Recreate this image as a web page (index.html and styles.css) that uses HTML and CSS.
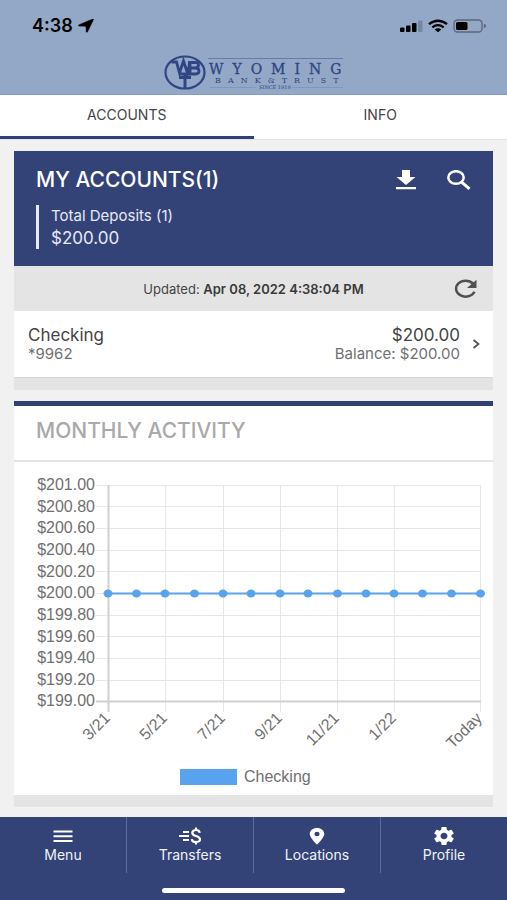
FILE: index.html
```html
<!DOCTYPE html>
<html lang="en">
<head>
<meta charset="utf-8">
<meta name="viewport" content="width=device-width, initial-scale=1">
<title>Wyoming Bank &amp; Trust</title>
<link rel="stylesheet" href="styles.css">
</head>
<body>
<header class="top">
  <div class="status">
    <div class="status-left">
      <span class="time">4:38</span>
      <svg width="16" height="14" viewBox="0 0 16 14"><path d="M15.500.6 9.400 13c-.3.5-1 .4-1.100-.2L8 7.200 1 7C.3 6.900.2 6.200.8 5.900L14.600.1c.6-.2 1.100.1.9.5z" stroke="#000" stroke-width=".6"/></svg>
    </div>
    <div class="status-right">
      <svg width="24" height="14" viewBox="0 0 24 14"><rect x="1" y="8.500" width="4.500" height="4.500" rx="1"/><rect x="7" y="6.500" width="4.500" height="6.500" rx="1"/><rect x="13" y="4" width="4.500" height="9" rx="1"/><rect x="19" y="1.500" width="4.500" height="11.500" rx="1" opacity=".2"/></svg>
      <svg width="20" height="14" viewBox="0 0 20 14"><g fill="none" stroke="#000" stroke-width="2.300"><path d="M1 5.200Q10-1.800 19 5.200"/><path d="M4.300 8.300q5.700-4.400 11.400 0"/></g><path d="M6.700 10.400q3.300-2.400 6.600 0L10 13.200z"/></svg>
      <svg width="34" height="14" viewBox="0 0 34 14"><rect x="1" y="1" width="28" height="12" rx="3.500" fill="none" stroke="#000" stroke-opacity=".4" stroke-width="1.300"/><rect x="3" y="3" width="11.500" height="8" rx="1.500"/><path d="M30.800 4.800q2.200.6 2.200 2.200t-2.200 2.200z" opacity=".4"/></svg>
    </div>
  </div>
  <svg class="logo" viewBox="0 0 180 36" width="180" height="36" role="img" aria-label="Wyoming Bank and Trust">
    <ellipse cx="21" cy="18.500" rx="19.500" ry="16" fill="none" stroke="#2f4584" stroke-width="2.200"/>
    <g fill="none" stroke="#2f4584" stroke-width="2.800"><path d="M7.500 8h5l3 11 4-12 4 12L26 8"/><path d="M24 8.500h7.500q3 0 3 2.600T31.500 14H25m6.500 0q3.500 0 3.500 3t-3.500 3H16M26 8v12"/><path d="M21 19v15M15 23.500h12" stroke-width="3"/></g>
    <path d="M44 4.500h135" stroke="#647dac"/>
    <path d="M46 33.500h46M128 33.500h51" stroke="#7f96bf"/>
    <text class="logo-name" x="45" y="20">WYOMIN<tspan class="last">G</tspan></text>
    <text class="logo-sub" x="51" y="29">BANK&amp;TRUS<tspan class="last">T</tspan></text>
    <text class="logo-since" x="95" y="35">SINCE 1919</text>
  </svg>
</header>

<nav class="tabs">
  <a class="tab active" href="#accounts">ACCOUNTS</a>
  <a class="tab" href="#info">INFO</a>
</nav>

<main class="content">
  <section class="card" id="accounts">
    <div class="summary">
      <div class="summary-head">
        <h1>MY ACCOUNTS(1)</h1>
        <div class="actions">
          <button type="button" aria-label="Download"><svg width="20" height="20" viewBox="0 0 20 20" fill="#fff"><path d="M6 0h8v7h5.500L10 15 .5 7H6zM0 17h20v2.200H0z"/></svg></button>
          <button type="button" aria-label="Search"><svg width="24" height="20" viewBox="0 0 24 20" fill="none" stroke="#fff"><ellipse cx="9" cy="7.500" rx="7.700" ry="6.300" stroke-width="2.500"/><path d="m14.500 12 8 6.800" stroke-width="3"/></svg></button>
        </div>
      </div>
      <div class="deposits">
        <span class="deposits-label">Total Deposits (1)</span>
        <span class="deposits-value">$200.00</span>
      </div>
    </div>
    <div class="updated">
      <p>Updated: <strong>Apr 08, 2022 4:38:04 PM</strong></p>
      <button class="refresh" type="button" aria-label="Refresh"><svg width="24" height="20" viewBox="0 0 24 20"><path d="M20.500 12.800A9.600 8 0 1 1 19 4.500" fill="none" stroke="#505050" stroke-width="2.500"/><path d="M22.500.8V9h-9.500z" fill="#505050"/></svg></button>
    </div>
    <a class="account" href="#checking">
      <span class="account-name"><span class="big">Checking</span><span class="small">*9962</span></span>
      <span class="account-sum"><span class="big">$200.00</span><span class="small">Balance: $200.00</span></span>
      <svg width="8" height="10" viewBox="0 0 8 10" fill="none" stroke="#505050" stroke-width="1.700"><path d="m1.500 1 5 4-5 4"/></svg>
    </a>
    <div class="card-foot"></div>
  </section>

  <section class="card activity">
    <h2>MONTHLY ACTIVITY</h2>
    <svg class="chart" viewBox="0 0 479 333" role="img" aria-label="Monthly activity of Checking">
      <path class="grid" d="M82 44.500h385M82 66.500h385M82 88.500h385M82 109.500h385M82 131.500h385M82 153.500h385M82 174.500h385M82 196.500h385M82 218.500h385M82 23.500h385M151.500 23v227M209.500 23v227M266.500 23v227M323.500 23v227M380.500 23v227M466.500 23v227"/>
      <path class="axis" d="M94.500 23v227M82 239.500h385"/>
      <g class="y-labels">
        <text x="81" y="28">$201.00</text><text x="81" y="50">$200.80</text><text x="81" y="71">$200.60</text><text x="81" y="93">$200.40</text><text x="81" y="115">$200.20</text><text x="81" y="136">$200.00</text><text x="81" y="158">$199.80</text><text x="81" y="180">$199.60</text><text x="81" y="201">$199.40</text><text x="81" y="223">$199.20</text><text x="81" y="244">$199.00</text>
      </g>
      <g class="x-labels">
        <text transform="translate(97 257) rotate(-45)">3/21</text><text transform="translate(154 257) rotate(-45)">5/21</text><text transform="translate(212 257) rotate(-45)">7/21</text><text transform="translate(269 257) rotate(-45)">9/21</text><text transform="translate(326 257) rotate(-45)">11/21</text><text transform="translate(383 257) rotate(-45)">1/22</text><text transform="translate(469 257) rotate(-45)">Today</text>
      </g>
      <path class="series" d="M94 131.500h372"/>
      <g class="points">
        <ellipse cx="94" cy="131.500" rx="4.500" ry="4"/><ellipse cx="122.500" cy="131.500" rx="4.500" ry="4"/><ellipse cx="151" cy="131.500" rx="4.500" ry="4"/><ellipse cx="180.500" cy="131.500" rx="4.500" ry="4"/><ellipse cx="209" cy="131.500" rx="4.500" ry="4"/><ellipse cx="237" cy="131.500" rx="4.500" ry="4"/><ellipse cx="266" cy="131.500" rx="4.500" ry="4"/><ellipse cx="294" cy="131.500" rx="4.500" ry="4"/><ellipse cx="323.500" cy="131.500" rx="4.500" ry="4"/><ellipse cx="352" cy="131.500" rx="4.500" ry="4"/><ellipse cx="380" cy="131.500" rx="4.500" ry="4"/><ellipse cx="408.500" cy="131.500" rx="4.500" ry="4"/><ellipse cx="437.500" cy="131.500" rx="4.500" ry="4"/><ellipse cx="466.500" cy="131.500" rx="4.500" ry="4"/>
      </g>
      <rect class="swatch" x="166" y="307" width="57" height="16"/>
      <text class="legend" x="230" y="320">Checking</text>
    </svg>
    <div class="card-foot"></div>
  </section>
</main>

<footer class="bottom">
  <nav class="nav">
    <a href="#menu"><svg width="20" height="18" viewBox="0 0 20 18"><path d="M.5 4.500h19M.5 9.200h19M.5 14h19" stroke="#fff" stroke-width="1.900"/></svg>Menu</a>
    <a href="#transfers"><svg width="22" height="18" viewBox="0 0 22 18" fill="none" stroke="#fff" stroke-width="2.200"><path d="M4 5h6M0 9h10M4 13h6" stroke-width="1.800"/><path d="M20.700 5.800Q20.400 3 17 3t-3.700 2.700Q13.300 8.200 17 9t4 3.400Q21 15 17 15t-4.200-2.900M17 .5V3M17 15v2.500"/></svg>Transfers</a>
    <a href="#locations"><svg width="16" height="18" viewBox="0 0 16 18"><path fill="#fff" fill-rule="evenodd" d="M8 1C3.900 1 .7 3.600.7 7 .7 11 8 17.500 8 17.500S15.300 11 15.300 7C15.300 3.600 12.100 1 8 1zm0 3.800a2.600 2.200 0 1 1 0 4.400 2.600 2.200 0 0 1 0-4.400z"/></svg>Locations</a>
    <a href="#profile"><svg width="20" height="18" viewBox="2 2 20 20" preserveAspectRatio="none"><path fill="#fff" d="M19.430 12.980c.04-.32.07-.64.07-.98s-.03-.66-.07-.98l2.110-1.650c.19-.15.24-.42.12-.64l-2-3.460c-.12-.22-.39-.3-.61-.22l-2.490 1c-.52-.4-1.080-.73-1.690-.98l-.38-2.650C14.460 2.180 14.250 2 14 2h-4c-.25 0-.46.18-.49.42l-.38 2.650c-.61.25-1.170.59-1.690.98l-2.490-1c-.23-.09-.49 0-.61.22l-2 3.460c-.13.22-.07.49.12.64l2.110 1.650c-.04.32-.07.65-.07.98s.03.66.07.98l-2.110 1.650c-.19.15-.24.42-.12.64l2 3.460c.12.22.39.3.61.22l2.490-1c.52.4 1.080.73 1.690.98l.38 2.650c.03.24.24.42.49.42h4c.25 0 .46-.18.49-.42l.38-2.650c.61-.25 1.170-.59 1.690-.98l2.490 1c.23.09.49 0 .61-.22l2-3.460c.12-.22.07-.49-.12-.64l-2.110-1.650zM12 15.500c-1.930 0-3.500-1.570-3.500-3.500s1.570-3.500 3.500-3.500 3.500 1.570 3.500 3.500-1.570 3.500-3.500 3.500z"/></svg>Profile</a>
  </nav>
  <div class="home"></div>
</footer>
</body>
</html>
```
FILE: styles.css
```css
* { box-sizing: border-box; }
body {
  margin: 0;
  min-height: 100vh;
  display: flex;
  flex-direction: column;
  background: #f1f1f1;
  color: #444;
  font-family: Inter, "Liberation Sans", sans-serif;
}
a { color: inherit; text-decoration: none; }
button { border: 0; padding: 0; background: none; display: flex; cursor: pointer; }
svg { display: block; flex: none; }
h1, h2, p { margin: 0; }

.top { height: 95px; background: #93a8c7; border-bottom: 1px solid #859cc0; }
.status { display: flex; justify-content: space-between; padding: 16px 20px 0 32px; height: 54px; align-items: flex-start; color: #000; }
.status-left, .status-right { display: flex; align-items: center; height: 20px; }
.status-left { gap: 5px; }
.status-right { gap: 5px; }
.time { font-size: 18px; font-weight: 600; line-height: 20px; }
.logo { margin: 0 auto; overflow: visible; }
.logo text { font-family: "DejaVu Serif", serif; fill: #2f4584; }
.logo .logo-name { font-size: 14px; letter-spacing: 9px; stroke: #2f4584; stroke-width: .3px; }
.logo .logo-sub { font-size: 8px; letter-spacing: 7px; }
.logo .logo-since { font-size: 5px; }
.logo .last { letter-spacing: 0; }

.tabs { display: flex; background: #fff; border-bottom: 1px solid #e2e2e2; }
.tab { flex: 1; height: 44px; text-align: center; font-size: 14px; line-height: 40px; border-bottom: 3px solid transparent; }
.tab.active { border-bottom-color: #2f4076; }

.content { flex: 1; padding: 11px 14px 10px; display: flex; flex-direction: column; gap: 11px; }
.card { background: #fff; }
.card-foot { height: 12px; background: #e4e4e4; }

.summary { background: #334277; color: #fff; padding: 16px 22px 17px; }
.summary-head { display: flex; justify-content: space-between; align-items: center; height: 26px; }
h1 { font-size: 21px; line-height: 26px; font-weight: 500; }
.actions { display: flex; gap: 31px; }
.deposits { margin-top: 12px; border-left: 3px solid #e6eaf5; padding-left: 12px; height: 44px; display: flex; flex-direction: column; color: #e6eaf5; }
.deposits-label { font-size: 15px; line-height: 22px; }
.deposits-value { font-size: 17px; line-height: 22px; }

.updated { display: flex; align-items: center; height: 45px; background: #e4e4e4; padding: 0 15px 0 39px; font-size: 13px; }
.updated p { flex: 1; text-align: center; }
.updated strong { font-weight: 600; color: #3a3a3a; }

.account { display: flex; align-items: center; height: 67px; padding: 0 13px 0 14px; border-bottom: 1px solid #d6d6d6; }
.account-name, .account-sum { display: flex; flex-direction: column; }
.account-sum { margin-left: auto; margin-right: 12px; text-align: right; }
.big { font-size: 17px; line-height: 20px; }
.small { font-size: 15px; line-height: 18px; color: #707070; }

.activity { border-top: 5px solid #2f3f74; }
h2 { padding: 0 22px; font-size: 21px; line-height: 50px; height: 56px; font-weight: 500; color: #a9a9a9; border-bottom: 2px solid #e4e4e4; }
.chart { width: 100%; height: auto; }
.chart text { font-family: "Liberation Sans", Arial, sans-serif; font-size: 16px; fill: #707070; }
.grid { stroke: #e6e6e6; fill: none; }
.axis { stroke: #d0d0d0; fill: none; stroke-width: 2; }
.y-labels, .x-labels { text-anchor: end; }
.series { stroke: #59a3ee; stroke-width: 2; }
.points, .swatch { fill: #59a3ee; }

.bottom { background: #334277; height: 84px; }
.nav { display: flex; height: 56px; }
.nav a { flex: 1; display: flex; flex-direction: column; align-items: center; padding-top: 10px; color: #f1f3fa; font-size: 14px; line-height: 20px; }
.nav a + a { border-left: 1px solid #5f6c9b; }
.home { width: 36%; height: 5px; margin: 15px auto 0; border-radius: 3px; background: #fff; }
```
